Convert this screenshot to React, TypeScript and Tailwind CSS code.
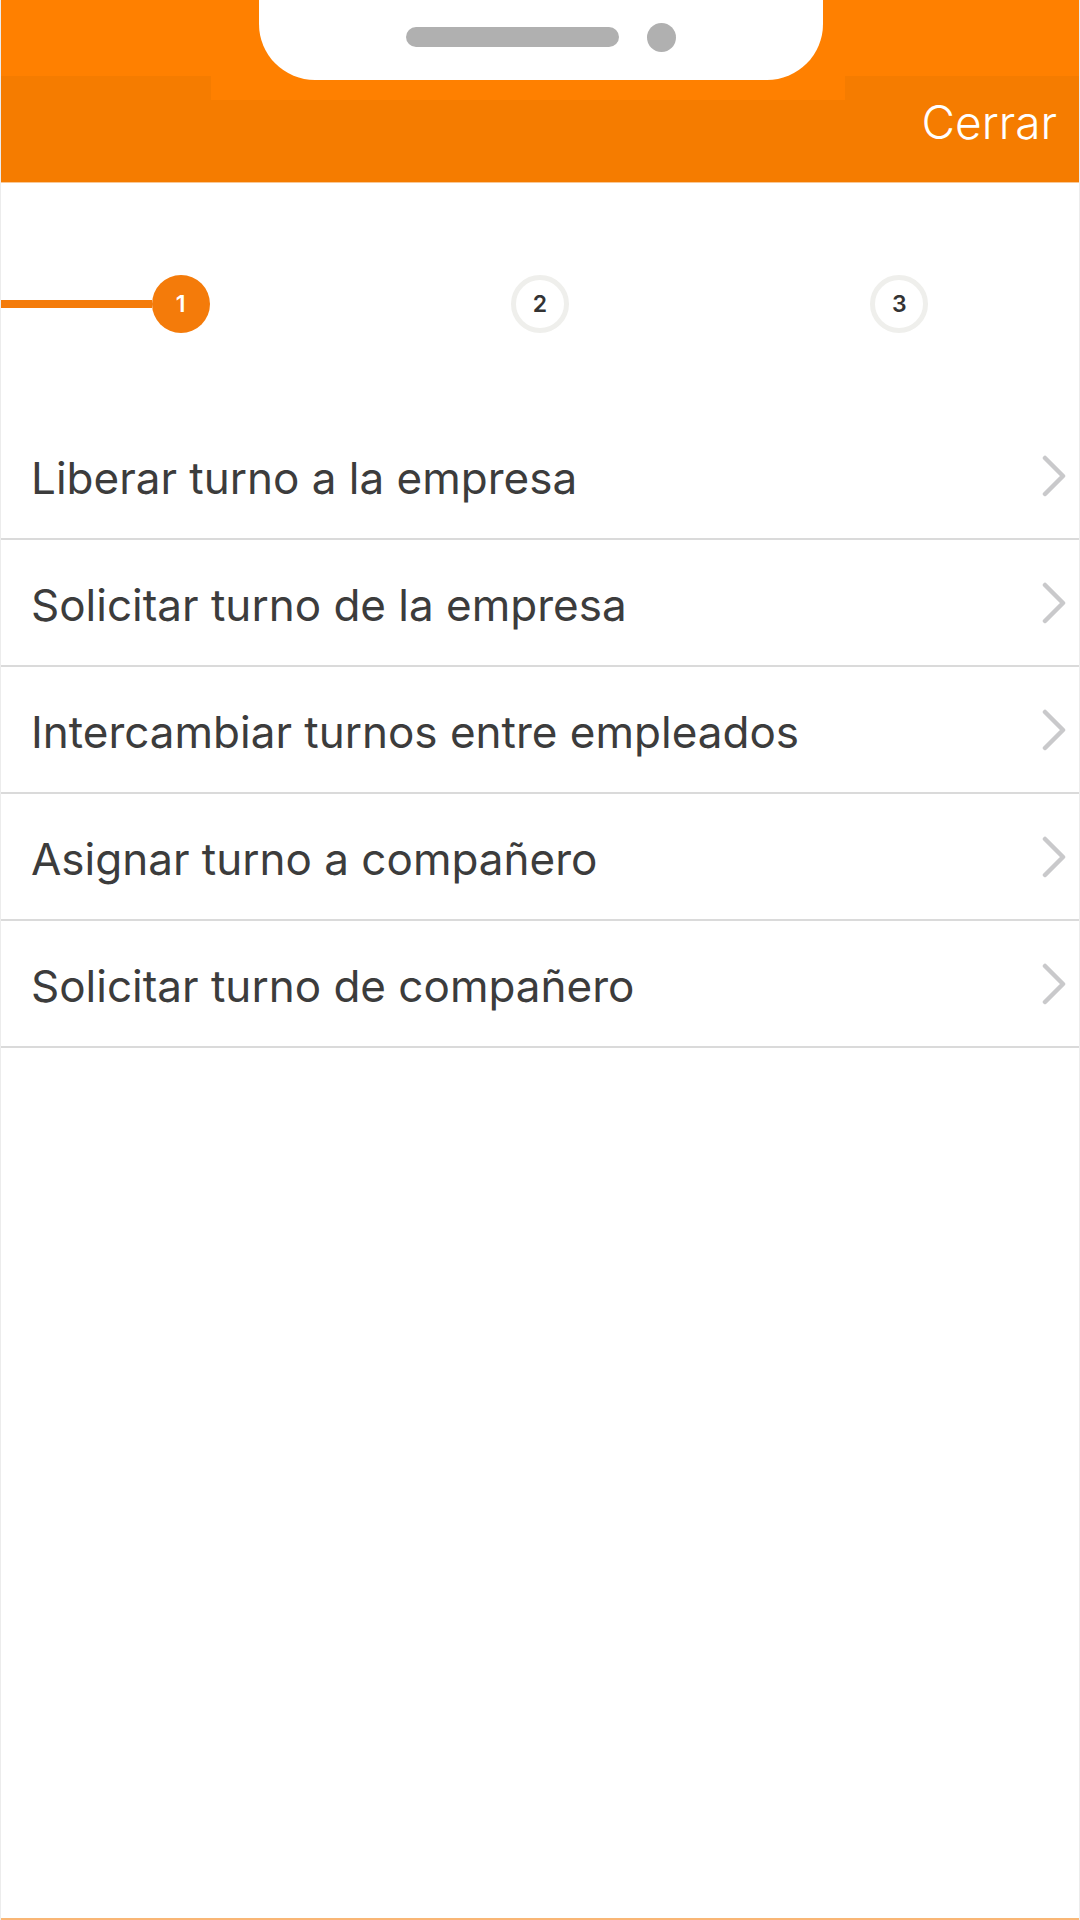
import React from 'react';

const options = [
  "Liberar turno a la empresa",
  "Solicitar turno de la empresa",
  "Intercambiar turnos entre empleados",
  "Asignar turno a compañero",
  "Solicitar turno de compañero",
];

const font = { fontFamily: 'Inter, "Noto Sans", sans-serif' };

const Chevron: React.FC = () => (
  <svg width="26" height="42" viewBox="0 0 26 42" fill="none">
    <polyline points="4,3 22,21 4,39" stroke="#C9C9CB" strokeWidth="4.5" strokeLinecap="round" strokeLinejoin="round" />
  </svg>
);

const StepCircle: React.FC<{ n: number; active?: boolean }> = ({ n, active }) => (
  <div
    className={
      active
        ? "w-[58px] h-[58px] rounded-full bg-[#F47B0A] flex items-center justify-center text-white text-[23px] font-semibold shrink-0"
        : "w-[58px] h-[58px] rounded-full bg-white border-[5px] border-[#EFEFEC] flex items-center justify-center text-[#333333] text-[23px] font-semibold shrink-0"
    }
  >
    {n}
  </div>
);

export default function App() {
  return (
    <div className="w-[1080px] h-[1920px] relative overflow-hidden flex flex-col bg-white border-x border-[#ECECEC]" style={font}>
      {/* Header */}
      <header className="relative flex flex-col shrink-0">
        <div className="h-[76px] bg-[#FF8000]" />
        <div className="h-[24px] flex">
          <div className="w-[210px] bg-[#F57C00]" />
          <div className="flex-1 bg-[#FF8000]" />
          <div className="w-[234px] bg-[#F57C00]" />
        </div>
        <div className="h-[83px] bg-[#F57C00] flex justify-end items-start pr-[22px] border-b border-[#F9C896]">
          <span className="text-white text-[46px] font-light leading-none -mt-[1px]">Cerrar</span>
        </div>

        {/* phone notch */}
        <div className="absolute top-0 left-[258px] w-[564px] h-[80px] bg-white rounded-b-[56px] flex items-center justify-center gap-[28px] pb-[6px]">
          <div className="w-[213px] h-[20px] rounded-full bg-[#B0B0B0]" />
          <div className="w-[29px] h-[29px] rounded-full bg-[#B0B0B0]" />
        </div>
      </header>

      {/* Stepper */}
      <div className="grid grid-cols-3 pt-[92px]">
        <div className="flex items-center">
          <div className="flex-1 h-[8px] bg-[#F47B0A]" />
          <StepCircle n={1} active />
          <div className="flex-1" />
        </div>
        <div className="flex items-center justify-center">
          <StepCircle n={2} />
        </div>
        <div className="flex items-center justify-center">
          <StepCircle n={3} />
        </div>
      </div>

      {/* Options */}
      <ul className="mt-[80px] flex flex-col">
        {options.map((label) => (
          <li
            key={label}
            className="h-[127px] flex items-center justify-between pl-[30px] pr-[12px] border-b-2 border-[#DADADA]"
          >
            <span className="text-[44px] text-[#3C3C3C] leading-none pt-[5px]">{label}</span>
            <Chevron />
          </li>
        ))}
      </ul>

      <div className="flex-1" />
      <div className="h-[2px] bg-[#F9B676] shrink-0" />
    </div>
  );
}
